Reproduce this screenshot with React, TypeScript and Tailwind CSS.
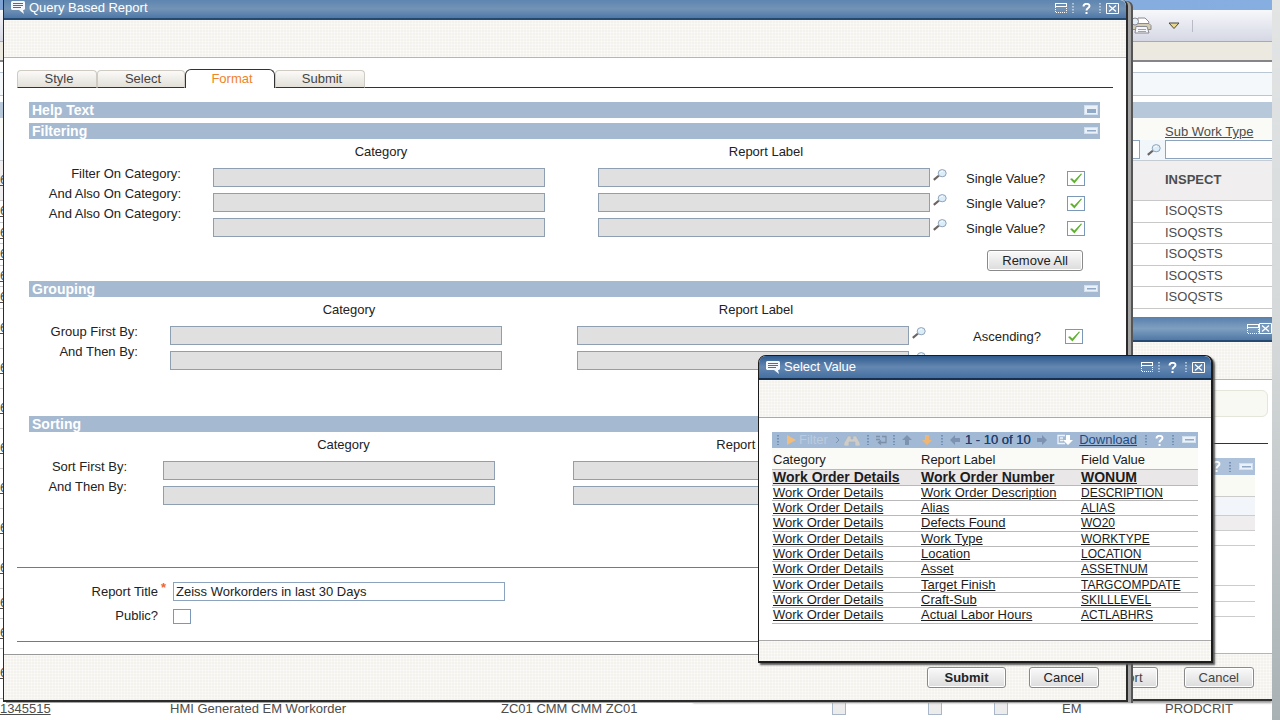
import React from "react";

type IconProps = { className?: string };

const texture =
  "bg-[#f4f2ed] bg-[linear-gradient(#ffffff66_1px,transparent_1px),linear-gradient(90deg,#ffffff66_1px,transparent_1px)] bg-[size:3px_3px]";

const buttonStyle =
  "h-[21px] rounded-[3px] border border-[#8a8a8a] bg-gradient-to-b from-[#fafafa] to-[#dcdcdc] px-[14px] text-[13px] leading-[18px] shadow-[inset_0_0_0_1px_#ffffff]";

const ChatIcon: React.FC = () => (
  <svg viewBox="0 0 14 13" className="h-[13px] w-[14px] shrink-0">
    <path d="M1 0h12l1 1v7l-1 1h-1l1 4-5-4H1L0 8V1z" fill="#f4f8fc" />
    <path d="M2 2.500h10M2 4.500h10M2 6.500h8" stroke="#4a6f9a" />
  </svg>
);

const WindowIcon: React.FC = () => (
  <svg viewBox="0 0 12 10" className="h-[10px] w-3" fill="none" stroke="#fff">
    <path d="M0 .5h12M0 3.500h12M.5 0v4M11.500 0v4" />
    <path d="M.5 4v5.500h11V4" strokeDasharray="1 1" />
  </svg>
);

const CloseIcon: React.FC = () => (
  <svg viewBox="0 0 13 11" className="h-[11px] w-[13px]" fill="none">
    <path d="M.5.5h12v10H.5z" stroke="#fff" />
    <path d="M3 2.500l7 6M10 2.500l-7 6" stroke="#fff" strokeWidth="1.300" />
  </svg>
);

const Dots: React.FC<{ light?: boolean }> = ({ light }) => (
  <svg viewBox="0 0 2 12" className="h-3 w-[2px] shrink-0">
    <path
      d="M1 1v10"
      stroke={light ? "#c9d9ea" : "#6484ab"}
      strokeWidth="1.500"
      strokeDasharray="1.500 1.500"
    />
  </svg>
);

const HelpIcon: React.FC = () => (
  <svg viewBox="0 0 9 11" className="h-[11px] w-[9px] shrink-0" fill="none">
    <path
      d="M1.500 3.500C1.500 0 7.500 0 7.500 3c0 2-3 2-3 4.500"
      stroke="#fff"
      strokeWidth="1.900"
    />
    <path d="M3.500 9h2v2h-2z" fill="#fff" />
  </svg>
);

const MinusIcon: React.FC<{ open?: boolean }> = ({ open }) => (
  <svg viewBox="0 0 14 10" className="h-[10px] w-[14px] shrink-0">
    <rect
      x=".5"
      y={open ? "0.5" : "1.5"}
      width="13"
      height={open ? "9" : "6"}
      fill="#eaf1f9"
      stroke="#d3e0ee"
    />
    <rect x="3" y="4" width="9" height={open ? "4" : "1.5"} fill="#8fa9c6" />
  </svg>
);

const SearchIcon: React.FC<IconProps> = ({ className }) => (
  <svg
    viewBox="0 0 14 12"
    className={`h-3 w-[14px] shrink-0 ${className ?? ""}`}
    fill="none"
  >
    <path d="M6 6.500L.8 10.800" stroke="#6b6463" strokeWidth="2.200" />
    <ellipse cx="9.200" cy="4.200" rx="4" ry="3.600" fill="#dcedfa" stroke="#8fa3b8" />
    <path d="M7 3.500c.7-1.200 2-1.500 3-1.200" stroke="#fff" />
  </svg>
);

const ArrowIcon: React.FC<{ className?: string; fill: string }> = ({
  className,
  fill,
}) => (
  <svg viewBox="0 0 12 12" className={`h-3 w-3 shrink-0 ${className ?? ""}`}>
    <path d="M6 1l5 5H8v5H4V6H1z" fill={fill} />
  </svg>
);

const PrinterIcon: React.FC = () => (
  <svg viewBox="0 0 22 18" className="h-[18px] w-[22px]" stroke="#8a8a92">
    <path d="M7 7l1-6h7l4 4-1 3z" fill="#fff" />
    <path d="M2 6.500h17l2 2v4H2z" fill="#d3ccb2" />
    <path d="M6 9.500h11l2 6.500H5z" fill="#f5f7fb" />
    <path d="M8 12.500h8M8 14.500h8" stroke="#8ea3c9" />
    <ellipse cx="5" cy="4.500" rx="3.500" ry="3.500" fill="#e3eef8" />
  </svg>
);

const CheckBox: React.FC<{ id: string; checked?: boolean }> = ({
  id,
  checked,
}) => (
  <span className="relative block h-[15px] w-[18px] shrink-0">
    <input
      id={id}
      type="checkbox"
      defaultChecked={checked}
      className="peer block h-[15px] w-[18px] appearance-none border border-[#7b98b8] bg-white"
    />
    <svg
      viewBox="0 0 12 10"
      className="pointer-events-none absolute top-[2px] left-[3px] hidden h-[11px] w-3 peer-checked:block"
    >
      <path d="M0 5.500l2-.8L4.300 7 11 0l1 .5L4.500 10z" fill="#62b032" />
    </svg>
  </span>
);

const TitleControls: React.FC = () => (
  <div className="flex items-center gap-[5px]">
    <button aria-label="Restore">
      <WindowIcon />
    </button>
    <Dots light />
    <button aria-label="Help" className="mx-[3px]">
      <HelpIcon />
    </button>
    <Dots light />
    <button aria-label="Close">
      <CloseIcon />
    </button>
  </div>
);

const SectionBar: React.FC<{ title: string; open?: boolean }> = ({
  title,
  open,
}) => (
  <div className="flex h-4 items-center justify-between bg-[#a5bad1] pr-[2px] pl-[3px]">
    <h2 className="text-[14px] leading-4 font-bold text-white">{title}</h2>
    <button aria-label={`Toggle ${title}`}>
      <MinusIcon open={open} />
    </button>
  </div>
);

type FieldRowsProps = {
  id: string;
  labels: string[];
  labelWidth: string;
  categoryWidth: string;
  reportWidth: string;
  icons?: boolean;
  children?: React.ReactNode;
};

const FieldRows: React.FC<FieldRowsProps> = ({
  id,
  labels,
  labelWidth,
  categoryWidth,
  reportWidth,
  icons,
  children,
}) => (
  <div className="flex">
    <div className={`flex shrink-0 flex-col pt-[25px] text-right ${labelWidth}`}>
      {labels.map((label, i) => (
        <label key={i} htmlFor={`${id}-${i}`} className="leading-5">
          {label}
        </label>
      ))}
    </div>
    <div className={`shrink-0 ${categoryWidth}`}>
      <p className="text-center leading-[26px]">Category</p>
      <div className="mt-[3px] flex flex-col gap-[6px]">
        {labels.map((_, i) => (
          <input
            key={i}
            id={`${id}-${i}`}
            readOnly
            className="h-[19px] w-[332px] border border-[#8e9fb2] bg-[#e0e0e0] px-[2px]"
          />
        ))}
      </div>
    </div>
    <div className={`ml-[49px] shrink-0 ${reportWidth}`}>
      <p className="text-center leading-[26px]">Report Label</p>
      <div className="mt-[3px] flex flex-col gap-[6px]">
        {labels.map((label, i) => (
          <div key={i} className="flex gap-[3px]">
            <input
              aria-label={`Report label, ${label}`}
              readOnly
              className="h-[19px] w-[332px] shrink-0 border border-[#8e9fb2] bg-[#e0e0e0] px-[2px]"
            />
            {icons && <SearchIcon className="mt-px" />}
          </div>
        ))}
      </div>
    </div>
    {children}
  </div>
);

const workRows = [
  { height: "h-[22px]", type: "ISOQSTS" },
  { height: "h-[21px]", type: "ISOQSTS" },
  { height: "h-[22px]", type: "ISOQSTS" },
  { height: "h-[21px]", type: "ISOQSTS" },
  { height: "h-[22px]", type: "ISOQSTS" },
  { height: "h-10", type: "" },
  { height: "h-10", type: "" },
  { height: "h-10", type: "" },
  { height: "h-10", type: "" },
  { height: "h-10", type: "" },
  { height: "h-10", type: "" },
  { height: "h-10", type: "" },
  { height: "h-[30px]", type: "" },
  { height: "h-[30px]", type: "" },
  { height: "h-[50px]", type: "" },
];

const WorkOrderPage: React.FC = () => (
  <div className="text-[13px] text-[#4d4d4d]">
    <div className="h-[10px] bg-gradient-to-r from-[#7ea3d4] to-[#86aee0]" />
    <div className="flex h-8 items-center justify-end gap-3 border-b border-[#a9a9b5] bg-gradient-to-b from-[#f7f8fb] to-[#d5d7e4] pr-20">
      <span className="mr-1">
        <PrinterIcon />
      </span>
      <svg viewBox="0 0 12 8" className="h-2 w-3">
        <path d="M1 1h10L6 6.500z" fill="#e8d98c" stroke="#4d4938" />
      </svg>
      <span className="-mr-px h-3 w-px bg-[#b9bac6]" />
    </div>
    <div className="h-5 border-b-2 border-[#85858a] bg-[#eceae0]" />
    <div className="mt-[10px] h-6 border-y border-[#b9c6d3] bg-[#f4f8fb]" />
    <div className="mt-[6px] h-4 bg-[#b6c8da]" />
    <table className="w-full table-fixed border-collapse text-left">
      <colgroup>
        <col className="w-[170px]" />
        <col className="w-[331px]" />
        <col />
        <col className="w-24" />
        <col className="w-[66px]" />
        <col className="w-[68px]" />
        <col className="w-[103px]" />
        <col className="w-[107px]" />
      </colgroup>
      <thead>
        <tr className="h-[22px] bg-[#fafaf7]">
          <th colSpan={7} />
          <th className="align-bottom leading-4 font-normal">
            <a href="#type" className="underline">
              Sub Work Type
            </a>
          </th>
        </tr>
        <tr className="h-5 border-b border-[#c5cbd2] bg-[#f1f6fa]">
          <td colSpan={6} />
          <td>
            <div className="flex items-center gap-[7px]">
              <input
                aria-label="Work type filter"
                className="h-[19px] min-w-0 flex-1 border border-[#8ba3bd] bg-white"
              />
              <SearchIcon className="mr-1" />
            </div>
          </td>
          <td>
            <input
              aria-label="Sub work type filter"
              className="block h-[19px] w-full border border-r-0 border-[#8ba3bd] bg-white"
            />
          </td>
        </tr>
      </thead>
      <tbody>
        <tr className="h-10 border-b border-[#c8c8c8] bg-[#f0eeef]">
          <td className="underline">6</td>
          <td colSpan={6} />
          <td className="font-bold">INSPECT</td>
        </tr>
        {workRows.map((row, i) => (
          <tr key={i} className={`border-b border-[#c8c8c8] ${row.height}`}>
            <td className="leading-4 underline">6</td>
            <td colSpan={6} />
            <td className="leading-4">{row.type}</td>
          </tr>
        ))}
        <tr className="h-5">
          <td>
            <a href="#1345515" className="underline">
              1345515
            </a>
          </td>
          <td>HMI Generated EM Workorder</td>
          <td>ZC01 CMM CMM ZC01</td>
          {["a", "b", "c"].map((key) => (
            <td key={key}>
              <input
                type="checkbox"
                aria-label="Flag"
                className="block h-[13px] w-[14px] appearance-none border border-[#a9b8c8] bg-[#ececec]"
              />
            </td>
          ))}
          <td>EM</td>
          <td>PRODCRIT</td>
        </tr>
      </tbody>
    </table>
  </div>
);

const RunReportWindow: React.FC = () => (
  <div className="absolute top-[317px] right-0 left-[693px] border-b-2 border-[#333] bg-white shadow-[0_2px_2px_#999]">
    <div className="flex h-[25px] items-center justify-end border-b-2 border-[#26496f] bg-gradient-to-b from-[#5880ac] via-[#7f9fc0] to-[#5079a6]">
      <WindowIcon />
      <CloseIcon />
    </div>
    <div className={`h-[38px] border-b border-[#b5b5b5] ${texture}`} />
    <div className="mt-[10px] mr-1 h-[27px] rounded-md border border-[#e6e5da] bg-[#f9f9f4]" />
    <div className="mt-[26px] mr-1 h-px bg-[#333]" />
    <div className="mt-[14px] mr-[17px]">
      <div className="flex h-[17px] items-center justify-end gap-2 bg-[#adc2da] pr-[2px]">
        <HelpIcon />
        <Dots />
        <MinusIcon />
      </div>
      <div className="h-[22px] border-b border-[#ccc] bg-[#fafaf5]" />
      <div className="h-[19px] border-b border-[#ccc] bg-[#f2f6fa]" />
      <div className="h-[15px] border-b border-[#ccc] bg-[#efedee]" />
      <div className="h-[15px] border-b border-[#ccc]" />
      <div className="h-10 border-b border-[#ccc]" />
      <div className="h-4 border-b border-[#ccc]" />
      <div className="h-[15px] border-b border-[#ccc]" />
    </div>
    <div
      className={`mt-9 flex h-[46px] justify-end gap-[26px] border-t border-[#b5b5b5] pt-[13px] pr-[18px] text-[#444] ${texture}`}
    >
      <button className={buttonStyle}>Report</button>
      <button className={buttonStyle}>Cancel</button>
    </div>
  </div>
);

const tabs = [
  { name: "Style", width: "w-20" },
  { name: "Select", width: "w-[88px]" },
  { name: "Format", width: "w-[90px]", active: true },
  { name: "Submit", width: "w-[90px]" },
];

const QueryReportWindow: React.FC = () => (
  <div className="absolute top-0 right-[144px] left-[3px] rounded-tr-md border-r-2 border-b-2 border-l border-[#2b2b2b] bg-white text-[13px] text-[#222] shadow-[3px_1px_0_#a3a3a3,5px_1px_0_#555]">
    <div className="flex h-5 items-start justify-between rounded-tr-md border-b-2 border-[#26496f] bg-gradient-to-b from-[#5e86b0] via-[#7393b5] to-[#4d78a8] pr-[7px] pl-[7px]">
      <h1 className="flex items-start gap-1 leading-4 text-white">
        <span className="pt-px">
          <ChatIcon />
        </span>
        Query Based Report
      </h1>
      <div className="pt-[2px]">
        <TitleControls />
      </div>
    </div>
    <div className={`h-[38px] border-b border-[#b5b5b5] ${texture}`} />

    <div className="px-[13px] pt-[11px]">
      <div role="tablist" className="flex items-end">
        {tabs.map((tab) => (
          <button
            key={tab.name}
            role="tab"
            aria-selected={!!tab.active}
            className={
              tab.active
                ? `h-[19px] rounded-t-md border border-b-0 border-[#333] bg-white pl-1 leading-4 text-[#f08326] ${tab.width}`
                : `h-[18px] rounded-t border border-[#cfcbc2] border-b-[#333] bg-gradient-to-b from-[#fbfaf8] to-[#e3e0d8] pl-1 leading-4 text-[#444] ${tab.width}`
            }
          >
            {tab.name}
          </button>
        ))}
        <div className="h-px flex-1 bg-[#333]" />
      </div>

      <div className="pt-[14px] pr-[13px] pl-3">
        <SectionBar title="Help Text" open />
        <div className="h-[5px]" />
        <SectionBar title="Filtering" />
        <FieldRows
          id="filter"
          labels={[
            "Filter On Category:",
            "And Also On Category:",
            "And Also On Category:",
          ]}
          labelWidth="w-[152px] mr-8"
          categoryWidth="w-[336px]"
          reportWidth="w-[336px]"
          icons
        >
          <div className="ml-8 pt-[27px]">
            {["one", "two", "three"].map((key) => (
              <div key={key} className="flex h-[25px] items-center">
                <label htmlFor={`single-${key}`} className="w-[101px]">
                  Single Value?
                </label>
                <CheckBox id={`single-${key}`} checked />
              </div>
            ))}
          </div>
        </FieldRows>
        <div className="flex justify-end pt-[9px] pr-[17px] pb-[10px]">
          <button className={buttonStyle}>Remove All</button>
        </div>

        <SectionBar title="Grouping" />
        <FieldRows
          id="group"
          labels={["Group First By:", "And Then By:"]}
          labelWidth="w-[109px] mr-8"
          categoryWidth="w-[358px]"
          reportWidth="w-[358px]"
          icons
        >
          <div className="ml-[38px] pt-[27px]">
            <div className="flex h-[25px] items-center">
              <label htmlFor="ascending" className="w-[92px]">
                Ascending?
              </label>
              <CheckBox id="ascending" checked />
            </div>
          </div>
        </FieldRows>
        <div className="h-[46px]" />

        <SectionBar title="Sorting" />
        <FieldRows
          id="sort"
          labels={["Sort First By:", "And Then By:"]}
          labelWidth="w-[98px] mr-9"
          categoryWidth="w-[361px]"
          reportWidth="w-[361px]"
        />
      </div>

      <div className="mt-[62px] border-y border-[#5580b0] pt-[14px] pb-4">
        <div className="flex">
          <label htmlFor="report-title" className="w-[141px] text-right">
            Report Title
          </label>
          <span className="w-[15px] pl-[3px] leading-3 font-bold text-[#f0662b]">
            *
          </span>
          <input
            id="report-title"
            defaultValue="Zeiss Workorders in last 30 Days"
            className="h-[19px] w-[332px] border border-[#8ba3bd] bg-white px-[2px]"
          />
        </div>
        <div className="mt-1 flex">
          <label htmlFor="public" className="mr-[15px] w-[141px] text-right">
            Public?
          </label>
          <div className="pt-[3px]">
            <CheckBox id="public" />
          </div>
        </div>
      </div>
    </div>

    <div
      className={`mt-3 flex h-[46px] justify-end gap-[23px] border-t border-[#999] pt-3 pr-[27px] ${texture}`}
    >
      <button className={`font-bold ${buttonStyle}`}>
        <span className="px-[2px]">Submit</span>
      </button>
      <button className={buttonStyle}>Cancel</button>
    </div>
  </div>
);

const values = [
  ["Work Order Number", "WONUM"],
  ["Work Order Description", "DESCRIPTION"],
  ["Alias", "ALIAS"],
  ["Defects Found", "WO20"],
  ["Work Type", "WORKTYPE"],
  ["Location", "LOCATION"],
  ["Asset", "ASSETNUM"],
  ["Target Finish", "TARGCOMPDATE"],
  ["Craft-Sub", "SKILLLEVEL"],
  ["Actual Labor Hours", "ACTLABHRS"],
];

const SelectValueWindow: React.FC = () => (
  <div className="absolute top-[355px] left-[758px] w-[455px] rounded-t-lg border border-r-2 border-b-2 border-[#1c1c1c] bg-white text-[13px] text-[#1c1c1c] shadow-[2px_2px_2px_#555]">
    <div className="flex h-6 items-center justify-between rounded-t-[7px] border-b-2 border-[#16304e] bg-gradient-to-b from-[#2f5b8f] via-[#6487b0] to-[#4470a2] pr-[6px] pl-[7px]">
      <h2 className="flex items-center gap-1 text-white">
        <ChatIcon />
        Select Value
      </h2>
      <TitleControls />
    </div>
    <div className={`h-[38px] border-b border-[#aaa] ${texture}`} />

    <div className="px-[13px] pt-[14px] pb-4">
      <div className="flex h-4 items-center bg-[#a1b9d5] pr-[2px] pl-[5px] leading-4">
        <Dots />
        <svg viewBox="0 0 10 10" className="ml-[7px] h-[10px] w-[10px]">
          <path d="M1 0l9 5-9 5z" fill="#f0bd7d" />
        </svg>
        <button className="ml-[3px] w-[33px] text-left text-[#bccbdc]">Filter</button>
        <svg viewBox="0 0 5 8" className="ml-[3px] h-2 w-[5px]" fill="none">
          <path d="M1 1l3 3-3 3" stroke="#7d92ad" />
        </svg>
        <svg viewBox="0 0 16 11" className="ml-1 h-[11px] w-4" fill="#cdccc9">
          <path d="M4 1h3v3h2V1h3l4 7v3h-5V7H5v4H0V8z" stroke="#a9afb9" strokeWidth=".6" />
        </svg>
        <span className="w-[7px]" />
        <Dots />
        <svg viewBox="0 0 12 10" className="mx-[6px] h-[10px] w-3" fill="none">
          <path d="M1 1.500h4M7 1.500h4v6H4M1 4.500h4M6 5.500L3.500 7.500 6 9.500" stroke="#7e90a8" strokeWidth="1.300" />
        </svg>
        <Dots />
        <ArrowIcon className="ml-[6px]" fill="#7d92b0" />
        <ArrowIcon className="mx-2 rotate-180" fill="#efb673" />
        <Dots />
        <ArrowIcon className="ml-[6px] -rotate-90" fill="#7d92b0" />
        <span className="ml-1 text-[#1f3f6c] [text-shadow:0_0_0_#1f3f6c]">
          1 - 10 of 10
        </span>
        <ArrowIcon className="ml-[5px] rotate-90" fill="#7d92b0" />
        <svg viewBox="0 0 16 12" className="mr-[6px] ml-auto h-3 w-4" fill="none">
          <path d="M8 1.500H1v8h7M3 4h3M3 6.500h3" stroke="#edf3f9" strokeWidth="1.300" />
          <path d="M9 1h4v5h3l-5 5-5-5h3z" fill="#fff" />
        </svg>
        <a href="#download" className="text-[#1f4b85] underline">
          Download
        </a>
        <span className="w-2" />
        <Dots />
        <span className="w-2" />
        <HelpIcon />
        <span className="w-2" />
        <Dots />
        <span className="w-2" />
        <MinusIcon />
      </div>

      <table className="w-full table-fixed border-collapse text-left">
        <colgroup>
          <col className="w-[148px]" />
          <col className="w-40" />
          <col />
        </colgroup>
        <thead>
          <tr className="h-[21px] border-b border-[#b9b9b9] bg-[#fafaf6]">
            <th className="pt-1 pl-px leading-4 font-normal">Category</th>
            <th className="pt-1 pl-px leading-4 font-normal">Report Label</th>
            <th className="pt-1 pl-px leading-4 font-normal">Field Value</th>
          </tr>
        </thead>
        <tbody>
          {values.map(([label, field], i) => (
            <tr
              key={field}
              className={`h-[15px] border-b border-[#b9b9b9] nth-[3n+1]:h-4 ${
                i === 0 ? "bg-[#e9e7e8] text-[14px] font-bold" : ""
              }`}
            >
              {["Work Order Details", label, field].map((text) => (
                <td
                  key={text}
                  className={`p-0 pl-px leading-[14px] whitespace-nowrap ${
                    i === 0 ? "" : "last:text-[12px]"
                  }`}
                >
                  <a href="#value" className="underline">
                    {text}
                  </a>
                </td>
              ))}
            </tr>
          ))}
        </tbody>
      </table>
    </div>
    <div className={`h-[21px] border-t border-[#aaa] ${texture}`} />
  </div>
);

const App: React.FC = () => {
  return (
    <main className="relative flex h-screen overflow-hidden bg-white font-['Liberation_Sans',Arial,sans-serif]">
      <div className="relative min-w-0 flex-1 overflow-hidden">
        <WorkOrderPage />
        <RunReportWindow />
        <QueryReportWindow />
        <SelectValueWindow />
      </div>
      <div className="w-2 bg-gradient-to-b from-[#e3e5e5] via-[#d3d7d8] to-[#a9b1b4]" />
    </main>
  );
};

export default App;
